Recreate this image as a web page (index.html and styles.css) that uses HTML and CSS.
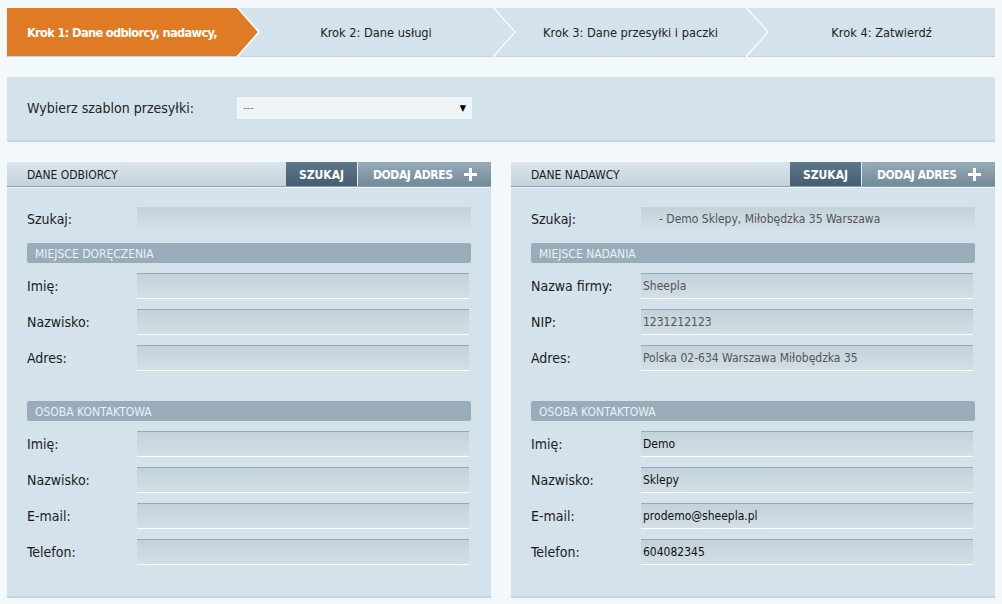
FILE: index.html
```html
<!DOCTYPE html>
<html lang="pl">
<head>
<meta charset="utf-8">
<title>Sheepla - nowa przesyłka</title>
<link rel="stylesheet" href="styles.css">
</head>
<body>
<div class="page">
  <nav class="steps">
    <div class="step active">Krok 1: Dane odbiorcy, nadawcy,</div>
    <svg class="chev" width="22" height="48" viewBox="0 0 22 48"><polygon points="0,0 21,24 0,48" fill="#e07b25"/><polyline points="0,-1 22,24 0,49" fill="none" stroke="#fff" stroke-width="1.6"/></svg>
    <div class="step">Krok 2: Dane usługi</div>
    <svg class="chev" width="22" height="48" viewBox="0 0 22 48"><polyline points="0,-1 22,24 0,49" fill="none" stroke="#fff" stroke-width="1.2"/></svg>
    <div class="step">Krok 3: Dane przesyłki i paczki</div>
    <svg class="chev" width="22" height="48" viewBox="0 0 22 48"><polyline points="0,-1 22,24 0,49" fill="none" stroke="#fff" stroke-width="1.2"/></svg>
    <div class="step">Krok 4: Zatwierdź</div>
  </nav>

  <section class="template">
    <span class="template-label">Wybierz szablon przesyłki:</span>
    <div class="select"><span>---</span><span class="caret">&#9660;</span></div>
  </section>

  <div class="columns">
    <section class="panel">
      <header class="panel-head">
        <span class="panel-title">DANE ODBIORCY</span>
        <span class="btn btn-dark">SZUKAJ</span>
        <span class="btn btn-light">DODAJ ADRES
          <svg class="plus" width="13" height="13" viewBox="0 0 13 13"><path d="M6.5 0v13M0 6.5h13" stroke="#fff" stroke-width="3"/></svg>
        </span>
      </header>
      <div class="panel-body">
        <div class="row search"><label>Szukaj:</label><div class="field"></div></div>
        <div class="section-title">MIEJSCE DORĘCZENIA</div>
        <div class="row"><label>Imię:</label><div class="field"></div></div>
        <div class="row"><label>Nazwisko:</label><div class="field"></div></div>
        <div class="row"><label>Adres:</label><div class="field"></div></div>
        <div class="section-title spaced">OSOBA KONTAKTOWA</div>
        <div class="row"><label>Imię:</label><div class="field"></div></div>
        <div class="row"><label>Nazwisko:</label><div class="field"></div></div>
        <div class="row"><label>E-mail:</label><div class="field"></div></div>
        <div class="row"><label>Telefon:</label><div class="field"></div></div>
      </div>
    </section>

    <section class="panel">
      <header class="panel-head">
        <span class="panel-title">DANE NADAWCY</span>
        <span class="btn btn-dark">SZUKAJ</span>
        <span class="btn btn-light">DODAJ ADRES
          <svg class="plus" width="13" height="13" viewBox="0 0 13 13"><path d="M6.5 0v13M0 6.5h13" stroke="#fff" stroke-width="3"/></svg>
        </span>
      </header>
      <div class="panel-body">
        <div class="row search"><label>Szukaj:</label><div class="field muted indent">- Demo Sklepy, Miłobędzka 35 Warszawa</div></div>
        <div class="section-title">MIEJSCE NADANIA</div>
        <div class="row"><label>Nazwa firmy:</label><div class="field muted">Sheepla</div></div>
        <div class="row"><label>NIP:</label><div class="field muted">1231212123</div></div>
        <div class="row"><label>Adres:</label><div class="field muted">Polska 02-634 Warszawa Miłobędzka 35</div></div>
        <div class="section-title spaced">OSOBA KONTAKTOWA</div>
        <div class="row"><label>Imię:</label><div class="field">Demo</div></div>
        <div class="row"><label>Nazwisko:</label><div class="field">Sklepy</div></div>
        <div class="row"><label>E-mail:</label><div class="field">prodemo@sheepla.pl</div></div>
        <div class="row"><label>Telefon:</label><div class="field">604082345</div></div>
      </div>
    </section>
  </div>
</div>
</body>
</html>
```
FILE: styles.css
```css
* { box-sizing: border-box; }
html, body { margin: 0; background: #f3f8fb; }
body {
  font-family: "DejaVu Sans Condensed", "DejaVu Sans", sans-serif;
  font-size: 12px;
  color: #1c1c1c;
}
.page { padding: 8px 7px 0 7px; }

/* steps */
.steps {
  display: grid;
  grid-template-columns: 230px 22px 234px 22px 231px 22px 1fr;
  height: 49px;
  background: #d4e2eb;
  border-bottom: 1px dotted #b3c8d6;
}
.step {
  display: flex;
  align-items: center;
  justify-content: center;
  height: 48px;
  padding-top: 1px;
  color: #222;
  font-size: 12.7px;
  white-space: nowrap;
}
.step.active {
  background: #e07b25;
  color: #fff;
  font-weight: bold;
  letter-spacing: -0.65px;
}
.chev { display: block; overflow: visible; }

/* template */
.template {
  margin-top: 20px;
  height: 65px;
  background: #d4e2eb;
  border-bottom: 2px solid #c2d6e4;
  display: flex;
  align-items: center;
  padding: 0 0 2px 20px;
}
.template-label { width: 210px; font-size: 14px; color: #222; }
.select {
  width: 235px;
  height: 22px;
  background: #eef4f8;
  display: flex;
  align-items: center;
  justify-content: space-between;
  padding: 0 6px;
  color: #777;
  font-size: 11px;
}
.caret { color: #000; font-size: 9px; }

/* panels */
.columns {
  margin-top: 20px;
  display: grid;
  grid-template-columns: 484px 484px;
  column-gap: 20px;
}
.panel {
  background: #d4e2eb;
  border-bottom: 2px solid #bcd5e7;
  height: 436px;
}
.panel-head {
  display: flex;
  align-items: stretch;
  height: 25px;
  background: linear-gradient(#dbe5ec, #c4d2db);
  border-bottom: 1px solid #8aa0af;
  box-shadow: 0 1px 0 #eef4f8;
}
.panel-title {
  flex: 1;
  display: flex;
  align-items: center;
  padding-left: 20px;
  padding-top: 1px;
  color: #1c1c1c;
}
.btn {
  display: flex;
  align-items: center;
  color: #fff;
  font-weight: bold;
  padding-top: 1px;
}
.btn-dark {
  width: 72px;
  justify-content: center;
  background: linear-gradient(#5f778b, #455d72);
  border-right: 1px solid #e9f0f5;
}
.btn-light {
  width: 133px;
  padding-left: 15px;
  letter-spacing: -0.4px;
  background: linear-gradient(#97aab7, #728a99);
}
.plus { margin-left: 11px; margin-top: -1px; }

.panel-body { padding: 20px 20px 0 20px; }
.row {
  display: flex;
  align-items: center;
  height: 26px;
  margin-bottom: 10px;
}
.row label {
  width: 110px;
  font-size: 14px;
  color: #1c1c1c;
}
.field {
  width: 332px;
  height: 26px;
  background: linear-gradient(#c3d1d9, #d2dfe7);
  border-top: 1px solid #93a9b8;
  border-bottom: 1px solid #ffffff;
  padding-left: 2px;
  display: flex;
  align-items: center;
  color: #111;
}
.row.search { height: 24px; margin-bottom: 12px; }
.row.search .field {
  width: 334px;
  height: 24px;
  border: none;
  background: linear-gradient(#c3d1d9, #d4e2eb);
}
.field.muted { color: #555; }
.field.indent { padding-left: 18px; }

.section-title {
  width: 444px;
  height: 20px;
  background: #98adb9;
  border-radius: 2px;
  color: #e9f1f6;
  padding-left: 8px;
  padding-top: 1px;
  display: flex;
  align-items: center;
  margin-bottom: 10px;
}
.section-title.spaced { margin-top: 30px; }
```
